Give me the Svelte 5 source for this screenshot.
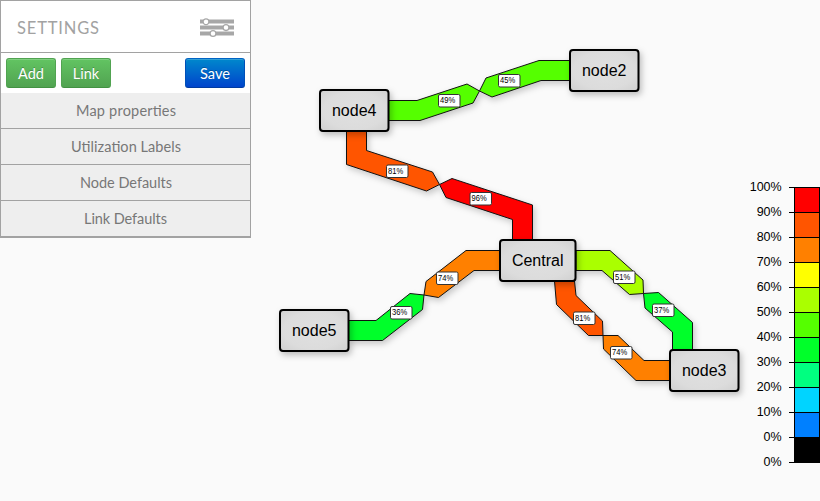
<script>
  const sections = [
    { name: 'Map properties', width: 100 },
    { name: 'Utilization Labels', width: 110 },
    { name: 'Node Defaults', width: 92 },
    { name: 'Link Defaults', width: 83 }
  ];
  const nodes = [
    { name: 'node2', x: 570, y: 50, w: 69 },
    { name: 'node4', x: 320, y: 90, w: 69 },
    { name: 'Central', x: 500, y: 240, w: 76 },
    { name: 'node5', x: 280, y: 310, w: 69 },
    { name: 'node3', x: 670, y: 350, w: 69 }
  ];
  const links = [
    { c: '#5f0', p: '388,100.5 417,100.5 467,84 479.5,91 473,103 420,120.5 388,120.5', v: 49, x: 438.5, y: 94.5 },
    { c: '#5f0', p: '479.5,91 486,78 539,60.5 570,60.5 570,80.5 541,80.5 492,97', v: 45, x: 498.5, y: 74.5 },
    { c: '#f50', p: '346.5,131 346.5,164.5 426.5,191 439.5,184.5 432.5,172 366.5,150.5 366.5,131', v: 81, x: 386.5, y: 165 },
    { c: '#f00', p: '439.5,184.5 452,178.5 532.5,205 532.5,240 512.5,240 512.5,219.5 446,197.5', v: 96, x: 470, y: 192.5 },
    { c: '#ff8000', p: '500,250.5 466,250.5 426,281.5 424,295 438.5,297.5 474,270.5 500,270.5', v: 74, x: 436.5, y: 272 },
    { c: '#00ff2a', p: '348,320.5 376,320.5 410,293.5 424,295 422.5,309.5 382.5,340.5 348,340.5', v: 36, x: 390.5, y: 306.5 },
    { c: '#af0', p: '576,250.5 610,250.5 643,280 643.5,293.5 629.5,294.5 602,270.5 576,270.5', v: 51, x: 613.5, y: 271 },
    { c: '#00ff2a', p: '643.5,293.5 658.5,292.5 692.5,322.5 692.5,350 672.5,350 672.5,332 645,308', v: 37, x: 652.5, y: 304 },
    { c: '#f50', p: '554.5,281 556.5,304.5 588.5,335.5 603,335.5 602.5,321 576,295.5 574.5,281', v: 81, x: 573.5, y: 312 },
    { c: '#ff8000', p: '603,335.5 618,335.5 644,360.5 670,360.5 670,380.5 636,380.5 603.5,349', v: 74, x: 610.5, y: 346.5 }
  ];
  const scale = ['#f00', '#f50', '#ff8000', '#ff0', '#af0', '#5f0', '#00ff2a', '#00ff80', '#00d4ff', '#0080ff', '#000'];
  const marks = [100, 90, 80, 70, 60, 50, 40, 30, 20, 10, 0, 0];
</script>

<main>
  <aside>
    <header>
      <svg width="102" height="28" aria-label="SETTINGS"><text x="1" y="20" textLength="82">SETTINGS</text></svg>
      <svg class="sliders" width="34" height="20" viewBox="0 0 34 20">
        <path d="M0 3.5H34M0 9.5H34M0 15.5H34" stroke="#a7a7a7" stroke-width="4" />
        <g fill="#fff" stroke="#a7a7a7" stroke-width="1.3">
          <circle cx="6" cy="3.8" r="2.9" /><circle cx="26" cy="9.6" r="2.9" /><circle cx="13" cy="15.5" r="2.9" />
        </g>
      </svg>
    </header>
    <div class="tools">
      <button>Add</button><button>Link</button><button class="save">Save</button>
    </div>
    {#each sections as s}
      <div class="section"><svg width={s.width} height="24"><text x="0" y="17.4" textLength={s.width}>{s.name}</text></svg></div>
    {/each}
  </aside>

  <svg class="map" width="820" height="501" viewBox="0 0 820 501">
    <defs>
      <radialGradient id="metal" cx=".5" cy=".5" r=".75">
        <stop offset="0" stop-color="#e0e0e0" /><stop offset=".6" stop-color="#dcdcdc" /><stop offset="1" stop-color="#cdcdcd" />
      </radialGradient>
    </defs>
    <g class="links">
      {#each links as l}<polygon points={l.p} fill={l.c} />{/each}
    </g>
    {#each links as l}
      <rect class="tag" x={l.x} y={l.y} width="21.5" height="12.5" rx="1.5" />
      <text class="value" x={l.x + 1.5} y={l.y + 8.8} textLength="15.2" lengthAdjust="spacingAndGlyphs">{l.v}%</text>
    {/each}
    {#each nodes as n}
      <rect class="node" x={n.x} y={n.y} width={n.w - 0.5} height="41" rx="3" />
      <text class="name" x={n.x + n.w / 2 - 0.3} y={n.y + 26} text-anchor="middle">{n.name}</text>
    {/each}
    {#each scale as c, i}
      <rect x="794.5" y={187.5 + i * 25} width="25" height="25" fill={c} stroke="#000" />
    {/each}
    {#each marks as m, i}
      <path d="M789 {187.5 + i * 25}H820" stroke="#000" />
      <text class="mark" x="781.7" y={191 + i * 25} text-anchor="end">{m}%</text>
    {/each}
  </svg>
</main>

<style>
  :global(body) { background: #fafafa; }
  main { position: relative; width: 820px; height: 501px; overflow: hidden; }
  aside {
    box-sizing: border-box; width: 251px; height: 238px;
    border: 1px solid #a2a2a2; border-bottom-width: 2px; background: #fff;
    font-family: Lato, "Open Sans", sans-serif;
  }
  header {
    display: flex; justify-content: space-between; align-items: center; box-sizing: border-box;
    height: 52px; padding: 2px 16px 0 15px; border-bottom: 1px solid #a2a2a2;
  }
  header text { font-size: 16.5px; fill: #a2a2a2; }
  .tools { display: flex; gap: 5px; padding: 5px; height: 30px; }
  button {
    box-sizing: border-box; width: 50px; height: 30px; padding: 1px 0 0; border-radius: 3px;
    border: 1px solid; border-color: #51a351 #51a351 #429242;
    background: linear-gradient(#62c462, #51a351); color: #fff;
    font: 14.5px Lato, sans-serif; text-shadow: 0 -1px 0 rgba(0, 0, 0, .25);
    box-shadow: inset 0 1px 0 rgba(255, 255, 255, .2);
  }
  .save {
    width: 60px; margin-left: auto; background: linear-gradient(#08c, #04c);
    border-color: #0064c4 #0050b8 #003ba0;
  }
  .section {
    display: flex; justify-content: center; align-items: center; box-sizing: border-box;
    height: 36px; background: #eee; border-bottom: 1px solid #a2a2a2;
  }
  .section:last-child { height: 35px; border-bottom: 0; }
  .section text { font-size: 14.5px; fill: #777; }
  .section svg, header svg { overflow: visible; }
  .map { position: absolute; inset: 0; font-family: "Liberation Sans", Arial, sans-serif; }
  .links { filter: drop-shadow(2px 3px 3px rgba(0, 0, 0, .2)); }
  .links polygon { stroke: #111; stroke-width: 1; }
  .tag { fill: #fff; stroke: #333; stroke-width: 1; }
  .value { font-size: 8.3px; }
  .node { fill: url(#metal); stroke: #000; stroke-width: 2; filter: drop-shadow(2px 3px 3px rgba(0, 0, 0, .25)); }
  .name { font-size: 16px; }
  .mark { font-size: 12.5px; }
</style>
